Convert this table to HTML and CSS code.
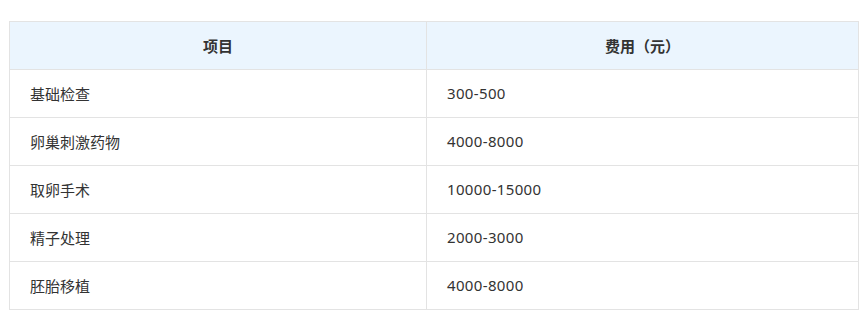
FILE: index.html
```html
<!DOCTYPE html>
<html lang="zh-CN">
<head>
<meta charset="utf-8">
<title>费用</title>
<link rel="stylesheet" href="styles.css">
</head>
<body>
<div class="wrap">
  <table class="fee-table">
    <colgroup>
      <col class="col-item">
      <col class="col-fee">
    </colgroup>
    <thead>
      <tr><th>项目</th><th>费用（元）</th></tr>
    </thead>
    <tbody>
      <tr><td>基础检查</td><td class="num">300-500</td></tr>
      <tr><td>卵巢刺激药物</td><td class="num">4000-8000</td></tr>
      <tr><td>取卵手术</td><td class="num">10000-15000</td></tr>
      <tr><td>精子处理</td><td class="num">2000-3000</td></tr>
      <tr><td>胚胎移植</td><td class="num">4000-8000</td></tr>
    </tbody>
  </table>
</div>
</body>
</html>
```

FILE: styles.css
```css
html, body {
  margin: 0;
  padding: 0;
  background: #fff;
}
.wrap {
  padding: 21px 8px 0 9px;
}
.fee-table {
  width: 850px;
  table-layout: fixed;
  border-collapse: separate;
  border-spacing: 0;
  border-top: 1px solid #e3e3e3;
  border-left: 1px solid #e3e3e3;
  font-family: "Noto Sans", "Noto Sans CJK SC", sans-serif;
  font-size: 15px;
  color: #333;
}
.col-item { width: 417px; }
.col-fee { width: 432px; }
.fee-table th,
.fee-table td {
  height: 47px;
  padding: 0 20px;
  border-right: 1px solid #e3e3e3;
  border-bottom: 1px solid #e3e3e3;
  line-height: 20px;
  vertical-align: middle;
}
.fee-table th {
  background: #ebf5fe;
  font-weight: 700;
  text-align: center;
  color: #333;
}
.fee-table td {
  text-align: left;
}
.fee-table td.num {
  height: 45px;
  padding-bottom: 2px;
  letter-spacing: 0.35px;
}
```
